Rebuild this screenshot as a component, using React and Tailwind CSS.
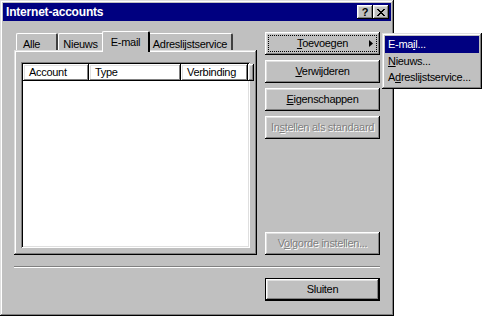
// Venster "Internet-accounts" in Windows 95/98-stijl
const raised =
  'shadow-[inset_-1px_-1px_#000,inset_1px_1px_#fff,inset_-2px_-2px_#808080,inset_2px_2px_#dfdfdf]';
const raisedWindow =
  'shadow-[inset_-1px_-1px_#000,inset_1px_1px_#dfdfdf,inset_-2px_-2px_#808080,inset_2px_2px_#fff]';
const sunken =
  'shadow-[inset_1px_1px_#808080,inset_-1px_-1px_#fff,inset_2px_2px_#000,inset_-2px_-2px_#dfdfdf]';
const defaultBtn =
  'shadow-[inset_0_0_0_1px_#000,inset_-2px_-2px_#000,inset_2px_2px_#fff,inset_-3px_-3px_#808080,inset_3px_3px_#dfdfdf]';
const disabledText = 'text-[#808080] [text-shadow:1px_1px_0_#fff]';

function Knop({ children, disabled, className = '' }) {
  return (
    <div
      className={`h-[23px] w-[115px] bg-[#c0c0c0] flex items-center justify-center ${raised} ${
        disabled ? disabledText : 'text-black'
      } ${className}`}
    >
      {children}
    </div>
  );
}

function Tab({ label, active, width, left }) {
  const align = left ? 'justify-start pl-[6px]' : 'justify-center';
  if (active) {
    return (
      <div className={`relative z-10 -mx-[2px] ${width} h-[21px] pt-[2px] bg-[#c0c0c0] border-l border-t border-white border-r-2 border-r-[#000] rounded-t-[2px] flex items-start ${align}`}>
        {label}
      </div>
    );
  }
  return (
    <div className={`mt-[2px] ${width} h-[18px] pt-[2px] bg-[#c0c0c0] border-l border-t border-white border-r-2 border-r-[#404040] rounded-t-[2px] flex items-start ${align}`}>
      {label}
    </div>
  );
}

function Kolom({ label, width }) {
  return (
    <div className={`h-[17px] ${width} shrink-0 pl-[6px] flex items-center ${raised}`}>{label}</div>
  );
}

export default function App() {
  return (
    <div className="relative w-[483px] h-[316px] bg-white font-['Liberation_Sans',Arial,sans-serif] text-[11px] tracking-[-0.3px] text-black overflow-hidden">
      {/* Venster */}
      <div className={`w-[394px] h-[316px] bg-[#c0c0c0] p-[3px] flex flex-col ${raisedWindow}`}>
        {/* Titelbalk */}
        <div className="h-[18px] bg-[#000080] flex items-center justify-between pl-[3px] pr-[2px]">
          <span className="text-white font-bold text-[12px] tracking-[-0.2px]">Internet-accounts</span>
          <div className="flex">
            <div className={`w-[16px] h-[14px] bg-[#c0c0c0] flex items-center justify-center font-bold text-[11px] leading-none ${raised}`}>
              ?
            </div>
            <div className={`w-[16px] h-[14px] bg-[#c0c0c0] flex items-center justify-center ${raised}`}>
              <svg width="8" height="7" viewBox="0 0 8 7" shapeRendering="crispEdges">
                <path d="M0 0h2v1h-2zM6 0h2v1h-2zM1 1h2v1h-2zM5 1h2v1h-2zM2 2h4v1h-4zM3 3h2v1h-2zM2 4h4v1h-4zM1 5h2v1h-2zM5 5h2v1h-2zM0 6h2v1h-2zM6 6h2v1h-2z" fill="#000" />
              </svg>
            </div>
          </div>
        </div>

        {/* Inhoud */}
        <div className="flex gap-[8px] pl-[11px] pt-[10px]">
          {/* Tabbladen */}
          <div className="w-[243px] flex flex-col">
            <div className="flex pl-[2px] h-[20px]">
              <Tab label="Alle" width="w-[42px]" left />
              <Tab label="Nieuws" width="w-[46px]" />
              <Tab label="E-mail" width="w-[48px]" active />
              <Tab label="Adreslijstservice" width="w-[85px]" />
            </div>
            <div className={`h-[205px] -mt-px pt-[12px] px-[7px] pb-[7px] ${raisedWindow}`}>
              <div className={`h-full bg-white p-[2px] ${sunken}`}>
                <div className="flex">
                  <Kolom label="Account" width="w-[66px]" />
                  <Kolom label="Type" width="w-[92px]" />
                  <Kolom label="Verbinding" width="w-[67px]" />
                  <Kolom label="" width="w-[2px]" />
                </div>
              </div>
            </div>
          </div>

          {/* Knoppen */}
          <div className="flex flex-col pt-[1px]">
            <Knop>
              <div className="relative w-[109px] h-[17px] border border-dotted border-black flex items-center justify-center">
                <span>
                  <u>T</u>oevoegen
                </span>
                <svg className="absolute right-[3px] top-[4px]" width="4" height="7" viewBox="0 0 4 7">
                  <path d="M0 0L4 3.5L0 7z" fill="#000" />
                </svg>
              </div>
            </Knop>
            <Knop className="mt-[5px]">
              <span>
                <u>V</u>erwijderen
              </span>
            </Knop>
            <Knop className="mt-[5px]">
              <span>
                <u>E</u>igenschappen
              </span>
            </Knop>
            <Knop className="mt-[5px]" disabled>
              <span>
                In<u>s</u>tellen als standaard
              </span>
            </Knop>
            <Knop className="mt-[93px]" disabled>
              <span>
                V<u>o</u>lgorde instellen...
              </span>
            </Knop>
          </div>
        </div>

        {/* Scheidingslijn */}
        <div className="ml-[11px] mt-[11px] w-[366px] h-[2px] border-t border-[#808080] border-b border-b-white" />

        {/* Sluiten */}
        <div className="flex justify-end pr-[11px] mt-[10px]">
          <div className={`h-[23px] w-[115px] bg-[#c0c0c0] flex items-center justify-center ${defaultBtn}`}>
            Sluiten
          </div>
        </div>
      </div>

      {/* Submenu Toevoegen */}
      <div className={`absolute left-[382px] top-[33px] w-[100px] h-[56px] bg-[#c0c0c0] p-[3px] flex flex-col ${raisedWindow}`}>
        <div className="h-[17px] bg-[#000080] text-white pl-[3px] flex items-center">
          <span>
            E-ma<u>i</u>l...
          </span>
        </div>
        <div className="h-[17px] pl-[3px] flex items-center">
          <span>
            <u>N</u>ieuws...
          </span>
        </div>
        <div className="h-[17px] pl-[3px] flex items-center">
          <span>
            A<u>d</u>reslijstservice...
          </span>
        </div>
      </div>
    </div>
  );
}
